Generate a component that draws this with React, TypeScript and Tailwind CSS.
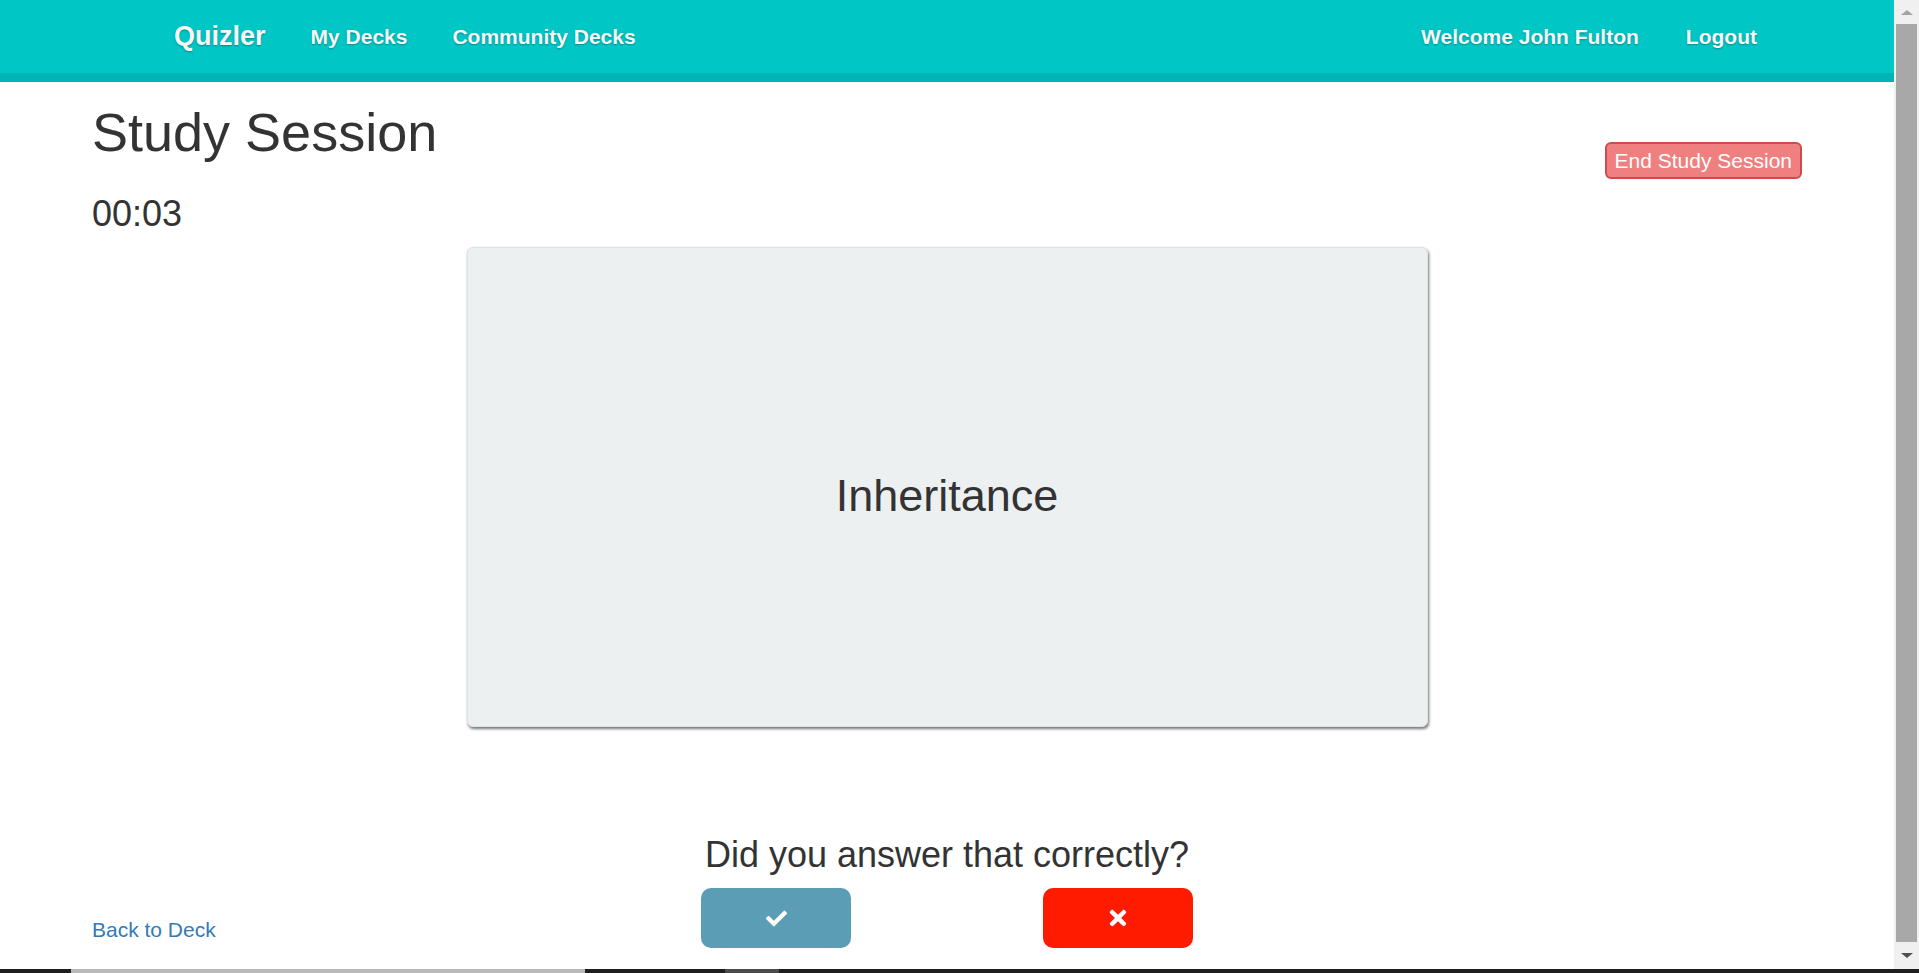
import React from 'react';
import { FaCheck, FaTimes } from 'react-icons/fa';

const navText = "text-[21px] font-bold text-[#f7f7f7] [text-shadow:0_1px_2px_rgba(0,0,0,0.3)]";

const Navbar: React.FC = () => (
  <nav className="h-[82px] shrink-0 border-b-[9px] border-[#00b3b4] bg-[#00c6c6]">
    <div className="flex h-[73px] items-center justify-between pl-[174px] pr-[137px]">
      <div className="flex items-center gap-[45px]">
        <span className="text-[27px] font-bold text-[#f7f7f7] [text-shadow:0_1px_2px_rgba(0,0,0,0.3)]">Quizler</span>
        <a className={navText}>My Decks</a>
        <a className={navText}>Community Decks</a>
      </div>
      <div className="flex items-center gap-[47px]">
        <span className={navText}>Welcome John Fulton</span>
        <a className={navText}>Logout</a>
      </div>
    </div>
  </nav>
);

const FakeScrollbar: React.FC = () => (
  <div className="flex w-[25px] shrink-0 flex-col items-center bg-[#f0f0f0]">
    <div className="flex h-[24px] items-center justify-center">
      <div className="h-0 w-0 border-x-[6px] border-b-[5px] border-x-transparent border-b-[#a3a3a3]" />
    </div>
    <div className="w-[21px] flex-1 bg-[#a8a8a8]" />
    <div className="flex h-[27px] items-center justify-center">
      <div className="h-0 w-0 border-x-[6px] border-t-[5px] border-x-transparent border-t-[#505050]" />
    </div>
  </div>
);

const App: React.FC = () => {
  return (
    <div className="flex h-[973px] w-full flex-col overflow-hidden bg-white font-['Liberation_Sans',Arial,sans-serif] text-[#333]">
      <div className="flex min-h-0 flex-1">
        <div className="flex min-w-0 flex-1 flex-col">
          <Navbar />

          <main className="flex flex-col px-[92px]">
            <div className="mt-[18px] flex items-start justify-between">
              <h1 className="pt-[3px] text-[54px] leading-[1.1] font-normal">Study Session</h1>
              <button className="mt-[42px] h-[37px] rounded-[6px] border-2 border-[#d24b4b] bg-[#f08080] px-[8px] text-[21px] leading-none text-white">
                End Study Session
              </button>
            </div>

            <div className="mt-[15px] text-[36px] leading-[1.1]">00:03</div>

            <div className="mx-auto mt-[13px] flex h-[480px] w-[961px] items-center justify-center rounded-[6px] border border-[#dfe2e3] bg-[#ecf0f1] shadow-[1px_2px_3px_rgba(0,0,0,0.55)]">
              <span className="pt-[17px] text-[45px] leading-none">Inheritance</span>
            </div>

            <div className="mt-[108px] text-center text-[36px] leading-[1.1]">Did you answer that correctly?</div>

            <div className="mt-[14px] grid grid-cols-[1fr_auto_1fr]">
              <a className="mt-[27px] self-start justify-self-start text-[21px] leading-[30px] text-[#337ab7]">Back to Deck</a>
              <div className="flex gap-[192px]">
                <button className="flex h-[60px] w-[150px] items-center justify-center rounded-[10px] bg-[#5b9db5] text-white">
                  <FaCheck size={21} />
                </button>
                <button className="flex h-[60px] w-[150px] items-center justify-center rounded-[10px] bg-[#ff1b00] text-white">
                  <FaTimes size={24} />
                </button>
              </div>
              <div />
            </div>
          </main>
        </div>
        <FakeScrollbar />
      </div>

      <div className="flex h-[4px] shrink-0 bg-[#1e1e1e]">
        <div className="ml-[71px] w-[514px] bg-[#b9b9b9]" />
        <div className="ml-[140px] w-[54px] bg-[#4a4a4a]" />
      </div>
    </div>
  );
};

export default App;
